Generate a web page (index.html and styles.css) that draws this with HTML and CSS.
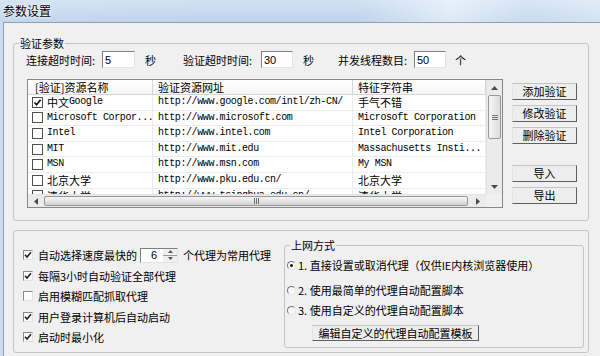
FILE: index.html
```html
<!DOCTYPE html>
<html lang="zh-CN">
<head>
    <meta charset="UTF-8">
    <title>参数设置</title>
    <link rel="stylesheet" href="styles.css">
</head>
<body>
    <div class="titlebar">参数设置</div>
    <div class="frame">
        <div class="client">

            <!-- 验证参数 -->
            <fieldset class="group verify">
                <legend>验证参数</legend>
                <div class="timeouts">
                    <span class="lbl w76">连接超时时间:</span><input class="num w33" type="text" value="5"><span class="unit w38">秒</span>
                    <span class="lbl w78">验证超时时间:</span><input class="num w32" type="text" value="30"><span class="unit w35">秒</span>
                    <span class="lbl w76">并发线程数目:</span><input class="num w32" type="text" value="50"><span class="unit u9">个</span>
                </div>
                <div class="verify-body">
                    <div class="listview">
                        <div class="list-main">
                            <div class="list-head">
                                <div class="col c1 h1">[验证]资源名称</div>
                                <div class="col c2">验证资源网址</div>
                                <div class="col c3">特征字符串</div>
                            </div>
                            <div class="list-row">
                                <div class="col c1"><span class="cb"><svg width="9" height="9" viewBox="0 0 9 9"><path d="M1.5 4.5 L3.6 6.8 L7.6 1.8" fill="none" stroke="#111" stroke-width="1.7"/></svg></span><span class="cn">中文</span>Google</div>
                                <div class="col c2">http://www.google.com/intl/zh-CN/</div>
                                <div class="col c3"><span class="cn">手气不错</span></div>
                            </div>
                            <div class="list-row">
                                <div class="col c1"><span class="cb"></span>Microsoft Corpor...</div>
                                <div class="col c2">http://www.microsoft.com</div>
                                <div class="col c3">Microsoft Corporation</div>
                            </div>
                            <div class="list-row">
                                <div class="col c1"><span class="cb"></span>Intel</div>
                                <div class="col c2">http://www.intel.com</div>
                                <div class="col c3">Intel Corporation</div>
                            </div>
                            <div class="list-row">
                                <div class="col c1"><span class="cb"></span>MIT</div>
                                <div class="col c2">http://www.mit.edu</div>
                                <div class="col c3">Massachusetts Insti...</div>
                            </div>
                            <div class="list-row">
                                <div class="col c1"><span class="cb"></span>MSN</div>
                                <div class="col c2">http://www.msn.com</div>
                                <div class="col c3">My MSN</div>
                            </div>
                            <div class="list-row">
                                <div class="col c1"><span class="cb"></span><span class="cn">北京大学</span></div>
                                <div class="col c2">http://www.pku.edu.cn/</div>
                                <div class="col c3"><span class="cn">北京大学</span></div>
                            </div>
                            <div class="list-row">
                                <div class="col c1"><span class="cb"></span><span class="cn">清华大学</span></div>
                                <div class="col c2">http://www.tsinghua.edu.cn/</div>
                                <div class="col c3"><span class="cn">清华大学</span></div>
                            </div>
                        </div>
                        <div class="vscroll">
                            <div class="sb-btn v-btn"><svg width="7" height="4"><path d="M0 4 L3.5 0 L7 4Z" fill="#4a4a4a"/></svg></div>
                            <div class="thumb vthumb"><span class="grip-v"></span></div>
                            <div class="sb-track"></div>
                            <div class="sb-btn v-btn"><svg width="7" height="4"><path d="M0 0 L3.5 4 L7 0Z" fill="#4a4a4a"/></svg></div>
                        </div>
                        <div class="hscroll">
                            <div class="sb-btn h-btn"><svg width="4" height="7"><path d="M4 0 L0 3.5 L4 7Z" fill="#4a4a4a"/></svg></div>
                            <div class="thumb hthumb"><span class="grip-h"></span></div>
                            <div class="sb-track"></div>
                            <div class="sb-btn h-btn"><svg width="4" height="7"><path d="M0 0 L4 3.5 L0 7Z" fill="#4a4a4a"/></svg></div>
                        </div>
                        <div class="corner"></div>
                    </div>
                    <div class="side-buttons">
                        <button class="btn">添加验证</button>
                        <button class="btn">修改验证</button>
                        <button class="btn">删除验证</button>
                        <button class="btn gap-top">导入</button>
                        <button class="btn">导出</button>
                    </div>
                </div>
            </fieldset>

            <!-- 其他选项 -->
            <div class="options">
                <div class="checks">
                    <div class="check-row">
                        <span class="box"><svg width="8" height="8" viewBox="0 0 8 8"><path d="M1 3.8 L3 6 L7 1.2" fill="none" stroke="#222" stroke-width="1.6"/></svg></span>
                        <span>自动选择速度最快的</span>
                        <span class="spin"><span class="spin-val">6</span><span class="spin-arrows"><span class="spin-up"><svg width="5" height="3"><path d="M0 3 L2.5 0 L5 3Z" fill="#555"/></svg></span><span class="spin-down"><svg width="5" height="3"><path d="M0 0 L2.5 3 L5 0Z" fill="#555"/></svg></span></span></span>
                        <span class="after-spin">个代理为常用代理</span>
                    </div>
                    <div class="check-row">
                        <span class="box"><svg width="8" height="8" viewBox="0 0 8 8"><path d="M1 3.8 L3 6 L7 1.2" fill="none" stroke="#222" stroke-width="1.6"/></svg></span>
                        <span>每隔3小时自动验证全部代理</span>
                    </div>
                    <div class="check-row">
                        <span class="box"></span>
                        <span>启用模糊匹配抓取代理</span>
                    </div>
                    <div class="check-row">
                        <span class="box"><svg width="8" height="8" viewBox="0 0 8 8"><path d="M1 3.8 L3 6 L7 1.2" fill="none" stroke="#222" stroke-width="1.6"/></svg></span>
                        <span>用户登录计算机后自动启动</span>
                    </div>
                    <div class="check-row">
                        <span class="box"><svg width="8" height="8" viewBox="0 0 8 8"><path d="M1 3.8 L3 6 L7 1.2" fill="none" stroke="#222" stroke-width="1.6"/></svg></span>
                        <span>启动时最小化</span>
                    </div>
                </div>

                <fieldset class="group net">
                    <legend>上网方式</legend>
                    <div class="radio-row r1"><span class="radio on"></span>1. 直接设置或取消代理（仅供IE内核浏览器使用）</div>
                    <div class="radio-row r2"><span class="radio"></span>2. 使用最简单的代理自动配置脚本</div>
                    <div class="radio-row r3"><span class="radio"></span>3. 使用自定义的代理自动配置脚本</div>
                    <button class="btn edit-btn">编辑自定义的代理自动配置模板</button>
                </fieldset>
            </div>

        </div>
    </div>
</body>
</html>
```

FILE: styles.css
```css
* {
    margin: 0;
    padding: 0;
    box-sizing: border-box;
}

body {
    width: 600px;
    height: 356px;
    overflow: hidden;
    font-family: "Noto Sans CJK SC", "Liberation Sans", sans-serif;
    font-size: 11px;
    color: #000;
    background-color: #c9dcf0;
}

/* 标题栏 */
.titlebar {
    height: 22px;
    padding-left: 3px;
    line-height: 22px;
    font-size: 12px;
    text-shadow: 0 0 4px #fff, 0 0 2px #fff;
    background:
        linear-gradient(90deg, rgba(255,255,255,0.1) 0%, rgba(255,255,255,0) 35%, rgba(255,255,255,0) 60%, rgba(255,255,255,0.5) 75%, rgba(255,255,255,0.15) 88%, rgba(255,255,255,0.35) 100%),
        linear-gradient(180deg, #d2e2f3 0%, #bcd3ec 100%);
}

.frame {
    height: 334px;
    padding-left: 3px;
}

.client {
    height: 100%;
    background-color: #f0f0f0;
    border-left: 1px solid #8e9fb2;
    border-top: 1px solid #8e9fb2;
}

/* 分组框 */
.group {
    border: 1px solid #bfc5cc;
    border-radius: 3px;
    padding: 0;
}

.group legend {
    margin-left: 5px;
    padding: 0 1px;
    line-height: 14px;
}

.verify {
    margin: 13px 0 0 9px;
    width: 576px;
    padding-bottom: 12px;
}

.timeouts {
    display: flex;
    align-items: center;
    height: 17px;
    margin-top: 1px;
    padding-left: 12px;
    line-height: 14px;
}

.lbl { display: inline-block; }
.unit { display: inline-block; margin-left: 10px; }
.u9 { margin-left: 9px; }
.w76 { width: 76px; }
.w78 { width: 78px; }
.w38 { width: 38px; }
.w35 { width: 35px; }
.w33 { width: 33px; }
.w32 { width: 32px; }

.num {
    height: 17px;
    padding: 0 2px;
    font-family: "Liberation Sans", sans-serif;
    font-size: 11px;
    background-color: #fff;
    border: 1px solid;
    border-color: #7f7f7f #e3e3e3 #e3e3e3 #7f7f7f;
    outline: none;
}

.verify-body {
    display: flex;
    margin-top: 11px;
    padding-left: 13px;
}

/* 列表 */
.listview {
    width: 476px;
    height: 129px;
    border: 1px solid #828790;
    background-color: #fff;
    display: grid;
    grid-template-columns: 458px 16px;
    grid-template-rows: 114px 13px;
}

.list-main {
    overflow: hidden;
}

.list-head {
    display: flex;
    height: 15px;
    line-height: 14px;
    background: linear-gradient(#ffffff, #f4f5f7);
    border-bottom: 1px solid #d5d5d5;
}

.list-head .col {
    border-right: 1px solid #d5d5d5;
    padding-left: 5px;
}

.list-head .h1 { padding-left: 7px; }

.list-row {
    display: flex;
    height: 15.6px;
    line-height: 14.6px;
    border-bottom: 1px solid #ececec;
    font-family: "Liberation Mono", "Noto Sans CJK SC", monospace;
    font-size: 10px;
    letter-spacing: -0.4px;
}

.list-row .col {
    border-right: 1px solid #ececec;
    padding-left: 5px;
    white-space: nowrap;
    overflow: hidden;
    display: flex;
    align-items: center;
}

.list-row .c1 { padding-left: 4px; }

.c1 { width: 125px; }
.c2 { width: 200px; }
.c3 { width: 133px; }

.cn {
    font-family: "Noto Sans CJK SC", sans-serif;
    font-size: 11px;
    letter-spacing: 0;
}

.cb {
    width: 11px;
    height: 11px;
    margin-right: 4px;
    border: 1px solid #4f4f4f;
    background-color: #fff;
    display: flex;
    align-items: center;
    justify-content: center;
    flex: none;
}

/* 滚动条 */
.vscroll {
    display: flex;
    flex-direction: column;
    background-color: #ebebeb;
    border-left: 1px solid #e2e2e2;
}

.hscroll {
    display: flex;
    background-color: #ebebeb;
    border-top: 1px solid #e2e2e2;
}

.corner {
    background-color: #f0f0f0;
}

.sb-btn {
    display: flex;
    align-items: center;
    justify-content: center;
}

.v-btn { height: 15px; }
.h-btn { width: 16px; }

.sb-track { flex: 1; }

.thumb {
    border: 1px solid #979797;
    border-radius: 2px;
    display: flex;
    align-items: center;
    justify-content: center;
}

.vthumb {
    height: 44px;
    margin: 0 1px;
    background: linear-gradient(90deg, #f6f6f6, #dcdcdc);
}

.hthumb {
    width: 424px;
    margin: 1px 0;
    background: linear-gradient(180deg, #f6f6f6, #d2d2d2);
}

.grip-v {
    width: 6px;
    height: 5px;
    background: repeating-linear-gradient(180deg, #6f6f6f 0 1px, transparent 1px 2px);
}

.grip-h {
    width: 5px;
    height: 6px;
    background: repeating-linear-gradient(90deg, #6f6f6f 0 1px, transparent 1px 2px);
}

/* 按钮 */
.btn {
    font-family: "Noto Sans CJK SC", sans-serif;
    font-size: 11px;
    line-height: 15px;
    height: 17px;
    background-color: #ededed;
    border: 1px solid;
    border-color: #c4c4c4 #5f5f5f #5f5f5f #e4e4e4;
    color: #000;
}

.side-buttons {
    display: flex;
    flex-direction: column;
    gap: 5px;
    margin: 4px 0 0 9px;
}

.side-buttons .btn { width: 65px; }
.side-buttons .gap-top { margin-top: 16px; }

/* 其他选项 */
.options {
    display: flex;
    margin: 9px 0 0 9px;
    width: 576px;
    height: 123px;
    border: 1px solid #bfc5cc;
    border-radius: 3px;
}

.checks {
    width: 270px;
    padding: 14px 0 0 9px;
}

.check-row {
    display: flex;
    align-items: center;
    height: 20.5px;
    line-height: 14px;
}

.box {
    width: 10px;
    height: 10px;
    margin-right: 5px;
    border: 1px solid;
    border-color: #8a8a8a #e2e2e2 #e2e2e2 #8a8a8a;
    background-color: #fbfbfb;
    display: flex;
    align-items: center;
    justify-content: center;
}

.spin {
    display: flex;
    width: 38px;
    height: 15px;
    margin-left: 3px;
    background-color: #fff;
    border: 1px solid;
    border-color: #7f7f7f #e3e3e3 #e3e3e3 #7f7f7f;
}

.spin-val {
    flex: 1;
    text-align: right;
    padding-right: 6px;
    font-family: "Liberation Sans", sans-serif;
    line-height: 13px;
}

.spin-arrows {
    width: 14px;
    display: flex;
    flex-direction: column;
    background-color: #f0f0f0;
}

.spin-up, .spin-down {
    flex: 1;
    display: flex;
    align-items: center;
    justify-content: center;
}

.spin-up { border-bottom: 1px solid #9a9a9a; }

.after-spin { margin-left: 5px; }

.net {
    width: 300px;
    height: 110px;
    margin-top: 7px;
}

.radio-row {
    display: flex;
    align-items: center;
    height: 16px;
    padding-left: 2px;
    line-height: 14px;
}

.r1 { margin-top: 5px; }
.r2 { margin-top: 9px; }
.r3 { margin-top: 4px; }

.radio {
    position: relative;
    width: 9px;
    height: 9px;
    margin-right: 2px;
    border-radius: 50%;
    border: 1px solid;
    border-color: #777 #e6e6e6 #e6e6e6 #777;
    background-color: #f7f7f7;
}

.radio.on::after {
    content: "";
    position: absolute;
    left: 2px;
    top: 2px;
    width: 3px;
    height: 3px;
    border-radius: 50%;
    background-color: #111;
}

.edit-btn {
    display: block;
    width: 167px;
    height: 16px;
    margin: 7px 0 0 27px;
}
```
